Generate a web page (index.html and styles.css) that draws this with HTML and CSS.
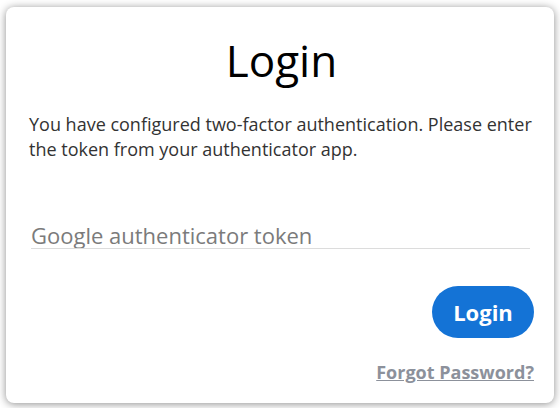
FILE: index.html
```html
<!DOCTYPE html>
<html>
<head>
<meta charset="utf-8">
<link rel="stylesheet" href="styles.css">
</head>
<body>
<div class="card">
  <h1 class="title">Login</h1>
  <p class="intro">You have configured two-factor authentication. Please enter the token from your authenticator app.</p>
  <div class="field">
    <input class="token" type="text" placeholder="Google authenticator token">
  </div>
  <div class="actions">
    <button class="btn">Login</button>
  </div>
  <div class="links">
    <a class="forgot" href="#">Forgot Password?</a>
  </div>
</div>
</body>
</html>
```
FILE: styles.css
```css
html, body {
  margin: 0;
  padding: 0;
  background: #ffffff;
}
body {
  font-family: "Open Sans", "Liberation Sans", sans-serif;
  width: 560px;
  height: 408px;
  overflow: hidden;
  padding: 7px 6px 0 6px;
  box-sizing: border-box;
}
.card {
  height: 396px;
  background: #fff;
  border-radius: 8px;
  box-shadow: 0 1px 8px rgba(0, 0, 0, 0.45);
  padding: 0 20px 0 23px;
  box-sizing: border-box;
  display: flex;
  flex-direction: column;
}
.title {
  margin: 23px 0 0 0;
  font-weight: 400;
  font-size: 44px;
  line-height: 60px;
  text-align: center;
  color: #000;
}
.intro {
  margin: 22px 0 0 0;
  font-size: 18px;
  line-height: 25px;
  color: #333;
}
.field {
  margin-top: 59px;
  padding: 0 4px 0 2px;
}
.token {
  display: block;
  width: 100%;
  box-sizing: border-box;
  border: none;
  border-bottom: 1px solid #dcdcdc;
  outline: none;
  padding: 0;
  height: 28px;
  font-family: "Open Sans", "Liberation Sans", sans-serif;
  font-size: 22px;
  color: #333;
  background: transparent;
}
.token::placeholder {
  color: #7b7b7b;
}
.actions {
  margin-top: 37px;
  display: flex;
  justify-content: flex-end;
}
.btn {
  width: 102px;
  height: 52px;
  border: none;
  border-radius: 26px;
  background: #1473d6;
  color: #fff;
  font-family: "Open Sans", "Liberation Sans", sans-serif;
  font-weight: 700;
  font-size: 22px;
  padding: 0;
}
.links {
  margin-top: 22px;
  display: flex;
  justify-content: flex-end;
}
.forgot {
  font-size: 18px;
  font-weight: 700;
  color: #8c919b;
  text-decoration: underline;
  line-height: 24px;
}
```
